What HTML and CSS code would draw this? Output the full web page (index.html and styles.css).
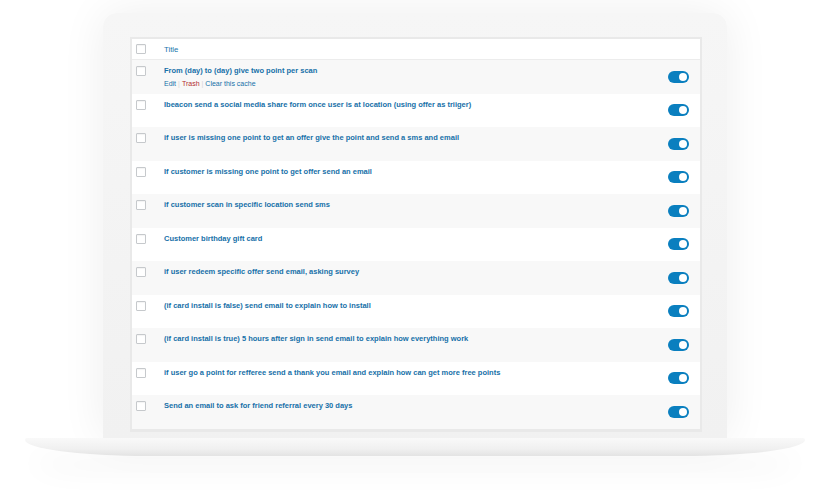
FILE: index.html
```html
<!DOCTYPE html>
<html>
<head>
<meta charset="utf-8">
<link rel="stylesheet" href="styles.css">
</head>
<body>
<div class="stage">
  <div class="lid">
    <div class="screen">
      <div class="thead">
        <span class="cb"></span>
        <span class="th-title">Title</span>
      </div>
      <div class="row odd">
        <span class="cb"></span>
        <div class="cell">
          <a class="title">From (day) to (day) give two point per scan</a>
          <div class="actions"><a class="edit">Edit</a><span class="sep">|</span><a class="trash">Trash</a><span class="sep">|</span><a class="edit">Clear this cache</a></div>
        </div>
        <span class="toggle"></span>
      </div>
      <div class="row">
        <span class="cb"></span>
        <div class="cell"><a class="title">Ibeacon send a social media share form once user is at location (using offer as triiger)</a></div>
        <span class="toggle"></span>
      </div>
      <div class="row odd">
        <span class="cb"></span>
        <div class="cell"><a class="title">if user is missing one point to get an offer give the point and send a sms and email</a></div>
        <span class="toggle"></span>
      </div>
      <div class="row">
        <span class="cb"></span>
        <div class="cell"><a class="title">If customer is missing one point to get offer send an email</a></div>
        <span class="toggle"></span>
      </div>
      <div class="row odd">
        <span class="cb"></span>
        <div class="cell"><a class="title">if customer scan in specific location send sms</a></div>
        <span class="toggle"></span>
      </div>
      <div class="row">
        <span class="cb"></span>
        <div class="cell"><a class="title">Customer birthday gift card</a></div>
        <span class="toggle"></span>
      </div>
      <div class="row odd">
        <span class="cb"></span>
        <div class="cell"><a class="title">if user redeem specific offer send email, asking survey</a></div>
        <span class="toggle"></span>
      </div>
      <div class="row">
        <span class="cb"></span>
        <div class="cell"><a class="title">(if card install is false) send email to explain how to install</a></div>
        <span class="toggle"></span>
      </div>
      <div class="row odd">
        <span class="cb"></span>
        <div class="cell"><a class="title">(if card install is true) 5 hours after sign in send email to explain how everything work</a></div>
        <span class="toggle"></span>
      </div>
      <div class="row">
        <span class="cb"></span>
        <div class="cell"><a class="title">if user go a point for refferee send a thank you email and explain how can get more free points</a></div>
        <span class="toggle"></span>
      </div>
      <div class="row odd">
        <span class="cb"></span>
        <div class="cell"><a class="title">Send an email to ask for friend referral every 30 days</a></div>
        <span class="toggle"></span>
      </div>
    </div>
  </div>
  <div class="base"></div>
</div>
</body>
</html>
```
FILE: styles.css
```css
html, body {
  margin: 0;
  padding: 0;
  background: #ffffff;
}
body {
  font-family: "Liberation Sans", Arial, sans-serif;
}
.stage {
  width: 834px;
  height: 500px;
  overflow: hidden;
  padding-top: 13px;
  box-sizing: border-box;
}
.lid {
  margin-left: 103px;
  width: 624px;
  height: 425px;
  box-sizing: border-box;
  padding: 24px 25px 0 27px;
  background: linear-gradient(180deg, #f6f6f6 0%, #f1f1f1 100%);
  border-radius: 14px 14px 0 0;
  box-shadow: 0 0 45px rgba(0, 0, 0, 0.07);
}
.screen {
  width: 572px;
  height: 395px;
  box-sizing: border-box;
  background: #ffffff;
  border: 2px solid #e9e9e9;
  border-bottom-width: 3px;
  overflow: hidden;
}
.thead {
  height: 20px;
  display: flex;
  align-items: center;
  padding-left: 4px;
  border-bottom: 1px solid #ececec;
  background: #fff;
}
.th-title {
  margin-left: 18px;
  font-size: 7.8px;
  color: #1b76ad;
}
.cb {
  flex: none;
  width: 8px;
  height: 8px;
  border: 1px solid #c6c9cc;
  border-radius: 1px;
  background: #fff;
  box-shadow: inset 0 1px 1px rgba(0, 0, 0, 0.05);
}
.row {
  height: 33.5px;
  box-sizing: border-box;
  display: flex;
  align-items: flex-start;
  padding: 0 11px 0 4px;
  background: #ffffff;
}
.row.odd {
  background: #f8f8f8;
}
.row .cb {
  margin-top: 6px;
}
.cell {
  margin-left: 18px;
  padding-top: 6px;
  flex: 1;
}
.title {
  display: block;
  font-size: 7.5px;
  line-height: 10px;
  font-weight: bold;
  color: #1670a8;
  white-space: nowrap;
}
.actions {
  margin-top: 3px;
  font-size: 7px;
  line-height: 9px;
  color: #1670a8;
  white-space: nowrap;
}
.actions .sep {
  color: #d4d4d4;
  margin: 0 2px;
}
.actions .trash {
  color: #b32d2e;
}
.toggle {
  flex: none;
  align-self: center;
  position: relative;
  width: 21px;
  height: 12px;
  border-radius: 6px;
  background: #0a7fbf;
}
.toggle::after {
  content: "";
  position: absolute;
  right: 2px;
  top: 2px;
  width: 8px;
  height: 8px;
  border-radius: 50%;
  background: #ffffff;
}
.base {
  margin-left: 25px;
  width: 780px;
  height: 18px;
  background: linear-gradient(180deg, #f9f9f9 0%, #f0f0f0 60%, #e3e3e3 100%);
  border-radius: 2px 2px 130px 130px / 2px 2px 17px 17px;
  box-shadow: 0 18px 28px -6px rgba(0, 0, 0, 0.1);
}
```
